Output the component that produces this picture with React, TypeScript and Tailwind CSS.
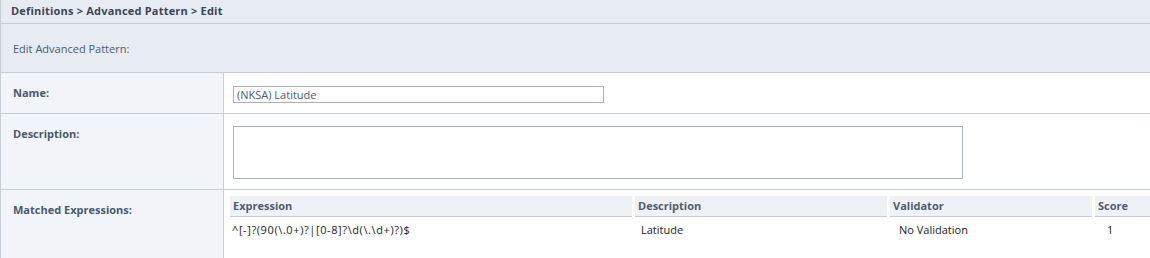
import React from 'react';

const font = { fontFamily: '"Open Sans", "Liberation Sans", Arial, sans-serif' };

const rows = [
    { expression: '^[-]?(90(\\.0+)?|[0-8]?\\d(\\.\\d+)?)$', description: 'Latitude', validator: 'No Validation', score: '1' },
];

const App = () => {
    return (
        <div className="w-[1150px] h-[258px] overflow-hidden bg-white text-[11px] border-l border-[#c4ccd6]" style={font}>
            {/* breadcrumb */}
            <div className="h-[24px] flex items-center px-[10px] bg-[#e7ecf2] border-b border-[#c4ccd6] font-bold text-[#3b4656] tracking-[0.2px]">
                Definitions &gt; Advanced Pattern &gt; Edit
            </div>
            <div className="h-[49px] flex items-center px-[12px] pt-[2px] bg-[#e7ecf2] border-b border-[#c4ccd6] text-[#4a5a70]">
                Edit Advanced Pattern:
            </div>

            {/* Name */}
            <div className="flex h-[41px] border-b border-[#c4ccd6]">
                <div className="w-[223px] shrink-0 bg-[#f1f4f8] border-r border-[#c4ccd6] pl-[12px] pt-[12px] font-bold text-[#4a5a70]">
                    Name:
                </div>
                <div className="pl-[9px] pt-[13px]">
                    <input
                        type="text"
                        defaultValue="(NKSA) Latitude"
                        className="block w-[371px] h-[17px] border border-[#aab1b9] px-[3px] text-[11px] text-[#4a5a78] outline-none"
                        style={font}
                    />
                </div>
            </div>

            {/* Description */}
            <div className="flex h-[76px] border-b border-[#c4ccd6]">
                <div className="w-[223px] shrink-0 bg-[#f1f4f8] border-r border-[#c4ccd6] pl-[12px] pt-[12px] font-bold text-[#4a5a70]">
                    Description:
                </div>
                <div className="pl-[9px] pt-[12px]">
                    <textarea
                        className="block w-[730px] h-[53px] border border-[#aab1b9] resize-none outline-none"
                    />
                </div>
            </div>

            {/* Matched Expressions */}
            <div className="flex h-[80px]">
                <div className="w-[223px] shrink-0 bg-[#f1f4f8] border-r border-[#c4ccd6] pl-[12px] pt-[12px] font-bold text-[#4a5a70]">
                    Matched Expressions:
                </div>
                <div className="pl-[6px] pt-[6px] flex-1">
                    <div className="grid grid-cols-[402px_252px_202px_1fr] gap-x-[3px]">
                        <div className="h-[21px] flex items-center pl-[3px] bg-[#eef2f6] border-b border-[#c5ccd4] font-bold text-[#4f5d72]">Expression</div>
                        <div className="h-[21px] flex items-center pl-[3px] bg-[#eef2f6] border-b border-[#c5ccd4] font-bold text-[#4f5d72]">Description</div>
                        <div className="h-[21px] flex items-center pl-[3px] bg-[#eef2f6] border-b border-[#c5ccd4] font-bold text-[#4f5d72]">Validator</div>
                        <div className="h-[21px] flex items-center pl-[3px] bg-[#eef2f6] border-b border-[#c5ccd4] font-bold text-[#4f5d72]">Score</div>
                        {rows.map((r) => (
                            <React.Fragment key={r.expression}>
                                <div className="pt-[5px] pl-[2px] text-[#222] tracking-[0.6px]">{r.expression}</div>
                                <div className="pt-[5px] pl-[6px] text-[#222]">{r.description}</div>
                                <div className="pt-[5px] pl-[9px] text-[#222]">{r.validator}</div>
                                <div className="pt-[5px] pl-[12px] text-[#222]">{r.score}</div>
                            </React.Fragment>
                        ))}
                    </div>
                </div>
            </div>
        </div>
    );
};

export default App;
